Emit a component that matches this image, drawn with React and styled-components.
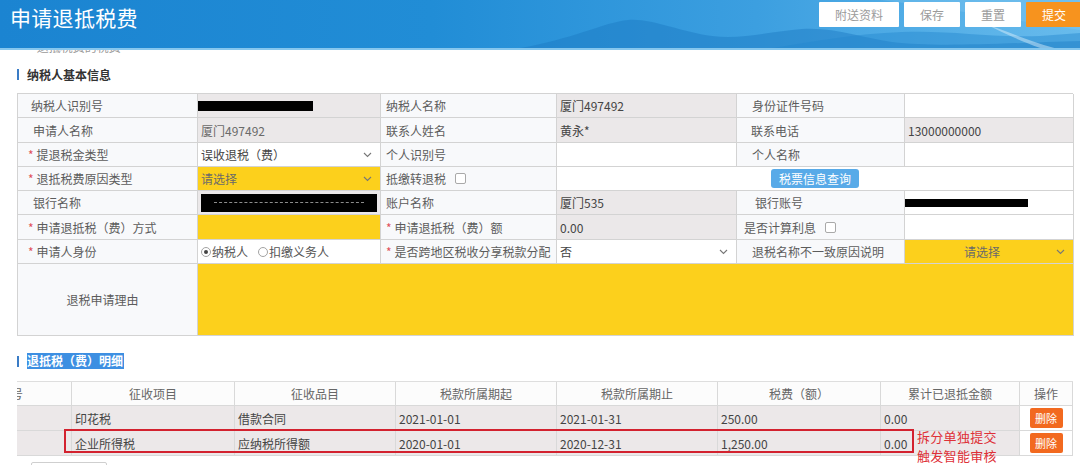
import React from 'react';
import styled, { createGlobalStyle } from 'styled-components';

const Global = createGlobalStyle`
  html, body { margin: 0; padding: 0; background: #fff; }
  body {
    font-family: "Noto Sans CJK SC", "Noto Sans", "Liberation Sans", sans-serif;
    font-size: 12px;
    color: #333;
  }
  * { box-sizing: border-box; }
`;

const Page = styled.div`
  width: 1080px;
  height: 465px;
  overflow: hidden;
`;

const Header = styled.header`
  position: relative;
  height: 50px;
  display: flex;
  justify-content: space-between;
  align-items: flex-start;
  padding-left: 10px;
  overflow: hidden;
  background: linear-gradient(90deg, #1b84d1 0%, #218dd6 40%, #3c9fe0 70%, #68bbec 100%);
  border-bottom: 2px solid #86c7ee;
`;

const HeaderArt = styled.svg`
  position: absolute;
  left: 0;
  top: 0;
  pointer-events: none;
`;

const Title = styled.h1`
  position: relative;
  margin: 6px 0 0;
  font-size: 21px;
  line-height: 22px;
  font-weight: 400;
  color: #fff;
  letter-spacing: 0.3px;
`;

const ButtonGroup = styled.div`
  position: relative;
  display: flex;
  gap: 5px;
  margin-top: 2px;
  margin-right: -2px;
`;

const HeaderButton = styled.button`
  width: ${p => p.$w}px;
  height: 25px;
  border: none;
  border-radius: 1px;
  font-family: inherit;
  font-size: 12px;
  background: ${p => (p.$primary ? '#f7931e' : '#fff')};
  color: ${p => (p.$primary ? '#fff' : '#9b9b9b')};
  padding: 0;
`;

const Crumb = styled.div`
  height: 3px;
  overflow: hidden;
  display: flex;
  align-items: flex-end;
  padding-left: 22px;
  color: #9a9a9a;
  font-size: 12px;
  line-height: 12px;
`;

const SectionTitle = styled.div`
  display: flex;
  align-items: center;
  gap: 8px;
  height: 16px;
  margin: ${p => p.$mt}px 0 0 17px;
  font-size: 12px;
  font-weight: 700;
  color: #333;
  &::before {
    content: '';
    width: 2px;
    height: 11px;
    background: #3a7cc6;
  }
`;

const Highlight = styled.span`
  background: #3d8fe2;
  color: #fff;
  line-height: 16px;
  padding: 0 1px 0 0;
`;

const FormGrid = styled.div`
  margin: 11px 0 0 17px;
  width: 1056px;
  display: grid;
  grid-template-columns: 180px 183px 176px 180px 168px 169px;
  grid-template-rows: 24px 25px 24px 24px 24px 25px 24px 72px;
  border-top: 1px solid #d3d3d3;
  border-left: 1px solid #d3d3d3;
`;

const Cell = styled.div`
  grid-column: span ${p => p.$span || 1};
  border-right: 1px solid #d3d3d3;
  border-bottom: 1px solid #d3d3d3;
  display: flex;
  align-items: center;
  white-space: nowrap;
  overflow: hidden;
  font-size: 12px;
`;

const LabelCell = styled(Cell)`
  background: #f8f9fb;
  color: #5c5c5c;
  padding-left: ${p => p.$pad ?? 14}px;
  justify-content: ${p => (p.$center ? 'center' : 'flex-start')};
  ${p => (p.$center ? 'padding-left: 0; padding-right: 10px;' : '')}
`;

const toneBg = { ro: '#ebe8e9', yellow: '#fcd01c', white: '#fff' };

const ValueCell = styled(Cell)`
  background: ${p => toneBg[p.$tone || 'white']};
  color: ${p => (p.$muted ? '#6a6a6a' : '#444')};
  padding: 0 3px;
  justify-content: ${p => (p.$center ? 'center' : 'flex-start')};
`;

const Star = styled.span`
  color: #e0505a;
  margin-right: 3px;
`;

const SelectText = styled.span`
  flex: 1;
  text-align: ${p => (p.$center ? 'center' : 'left')};
  color: ${p => p.$color || '#444'};
`;

const Arrow = styled.svg`
  flex: none;
  margin-right: 5px;
`;

const Check = styled.span`
  width: 11px;
  height: 11px;
  border: 1px solid #a9a9a9;
  border-radius: 2px;
  background: #fff;
  margin-left: 9px;
`;

const RadioGroup = styled.div`
  display: flex;
  align-items: center;
  gap: 10px;
  color: #555;
`;

const RadioItem = styled.label`
  display: flex;
  align-items: center;
  gap: 1px;
`;

const RadioDot = styled.span`
  width: 10px;
  height: 10px;
  border-radius: 50%;
  border: 1px solid #a3a3a3;
  background: #fff;
  display: flex;
  align-items: center;
  justify-content: center;
  &::after {
    content: '';
    width: 4px;
    height: 4px;
    border-radius: 50%;
    background: ${p => (p.$on ? '#444' : 'transparent')};
  }
`;

const QueryButton = styled.button`
  height: 19px;
  padding: 0 8px;
  border: none;
  border-radius: 3px;
  background: #58aae8;
  color: #fff;
  font-family: inherit;
  font-size: 12px;
  font-weight: 400;
`;

const Redact = styled.span`
  width: ${p => p.$w}px;
  height: ${p => p.$h}px;
  background: #000;
  display: flex;
  align-items: center;
  justify-content: center;
`;

const RedactLine = styled.span`
  width: 150px;
  height: 1px;
  border-top: 1px dashed rgba(255, 255, 255, 0.55);
`;

const DetailWrap = styled.div`
  position: relative;
  margin: 12px 0 0 17px;
  width: 1056px;
`;

const DetailGrid = styled.div`
  display: grid;
  grid-template-columns: 55px 163px 161px 161px 161px 163px 139px 53px;
  grid-template-rows: 24px 25px 25px;
  border-top: 1px solid #dedede;
`;

const DCell = styled.div`
  border-right: 1px solid #d9d9d9;
  border-bottom: 1px solid #d9d9d9;
  display: flex;
  align-items: center;
  overflow: hidden;
  white-space: nowrap;
  font-size: 12px;
`;

const DHead = styled(DCell)`
  background: #fcfcfc;
  color: #666;
  justify-content: ${p => (p.$left ? 'flex-start' : 'center')};
`;

const ClippedText = styled.span`
  margin-left: -18px;
`;

const DData = styled(DCell)`
  background: #ece8e9;
  color: #444;
  padding-left: 3px;
`;

const DOp = styled(DCell)`
  background: #fff;
  justify-content: center;
`;

const DeleteButton = styled.button`
  width: 33px;
  height: 20px;
  border: none;
  border-radius: 2px;
  background: #f2691f;
  color: #fff;
  font-family: inherit;
  font-size: 11px;
  padding: 0;
`;

const RedBox = styled.div`
  position: absolute;
  left: 47px;
  top: 48px;
  width: 850px;
  height: 24px;
  border: 2px solid #d3222f;
  pointer-events: none;
`;

const Note = styled.div`
  position: absolute;
  left: 900px;
  top: 46px;
  color: #de3138;
  font-size: 13px;
  line-height: 19px;
  letter-spacing: 0.3px;
`;

const PagerBox = styled.div`
  margin: 6px 0 0 31px;
  width: 76px;
  height: 20px;
  border: 1px solid #cfcfcf;
  border-radius: 2px;
`;

const Chevron = () => (
  <Arrow width="9" height="6" viewBox="0 0 9 6">
    <polyline points="1,1 4.5,4.5 8,1" fill="none" stroke="#777" strokeWidth="1.1" />
  </Arrow>
);

const Label = ({ req, children, ...rest }) => (
  <LabelCell {...rest}>
    {req && <Star>*</Star>}
    {children}
  </LabelCell>
);

const detailHead = ['征收项目', '征收品目', '税款所属期起', '税款所属期止', '税费（额）', '累计已退抵金额', '操作'];
const detailRows = [
  ['印花税', '借款合同', '2021-01-01', '2021-01-31', '250.00', '0.00'],
  ['企业所得税', '应纳税所得额', '2020-01-01', '2020-12-31', '1,250.00', '0.00'],
];

export default function App() {
  return (
    <Page>
      <Global />
      <Header>
        <HeaderArt width="1080" height="50" viewBox="0 0 1080 50">
          <path d="M520 48 C 570 40, 605 22, 628 20 C 652 18, 680 32, 712 36 C 742 40, 772 31, 802 29 C 835 27, 862 38, 892 42 C 935 47, 985 44, 1080 41 L1080 50 L520 50 Z" fill="#1a78c2" opacity="0.45" />
          <path d="M760 50 C 805 43, 850 34, 902 32 C 952 30, 992 38, 1040 36 L1080 33 L1080 50 Z" fill="#2487cf" opacity="0.45" />
          <path d="M985 24 C 1010 32, 1030 42, 1062 50 L1046 50 C 1022 42, 1004 33, 985 24 Z" fill="#e4f4fd" opacity="0.45" />
          <path d="M880 0 L1080 0 L1080 30 C 1020 22, 960 10, 880 0 Z" fill="#8fd0f3" opacity="0.25" />
        </HeaderArt>
        <Title>申请退抵税费</Title>
        <ButtonGroup>
          <HeaderButton $w={80}>附送资料</HeaderButton>
          <HeaderButton $w={56}>保存</HeaderButton>
          <HeaderButton $w={56}>重置</HeaderButton>
          <HeaderButton $w={56} $primary>提交</HeaderButton>
        </ButtonGroup>
      </Header>
      <Crumb>· 退抵税费的税费</Crumb>

      <SectionTitle $mt={13}>纳税人基本信息</SectionTitle>

      <FormGrid>
        <Label $pad={13}>纳税人识别号</Label>
        <ValueCell $tone="ro" style={{ paddingLeft: 0 }}>
          <Redact $w={115} $h={10} />
        </ValueCell>
        <Label $pad={5}>纳税人名称</Label>
        <ValueCell $tone="ro">厦门497492</ValueCell>
        <Label $pad={15}>身份证件号码</Label>
        <ValueCell />

        <Label $pad={15}>申请人名称</Label>
        <ValueCell $tone="ro" $muted>厦门497492</ValueCell>
        <Label $pad={5}>联系人姓名</Label>
        <ValueCell $tone="ro">黄永*</ValueCell>
        <Label $pad={14}>联系电话</Label>
        <ValueCell $tone="ro">13000000000</ValueCell>

        <Label req $pad={10}>提退税金类型</Label>
        <ValueCell>
          <SelectText>误收退税（费）</SelectText>
          <Chevron />
        </ValueCell>
        <Label $pad={5}>个人识别号</Label>
        <ValueCell />
        <Label $pad={15}>个人名称</Label>
        <ValueCell />

        <Label req $pad={10}>退抵税费原因类型</Label>
        <ValueCell $tone="yellow">
          <SelectText $color="#6a6a6a">请选择</SelectText>
          <Chevron />
        </ValueCell>
        <Label $pad={5}>
          抵缴转退税<Check />
        </Label>
        <ValueCell $span={3} $center>
          <QueryButton>税票信息查询</QueryButton>
        </ValueCell>

        <Label $pad={15}>银行名称</Label>
        <ValueCell $tone="ro">
          <Redact $w={179} $h={18}>
            <RedactLine />
          </Redact>
        </ValueCell>
        <Label $pad={5}>账户名称</Label>
        <ValueCell $tone="ro">厦门535</ValueCell>
        <Label $pad={18}>银行账号</Label>
        <ValueCell style={{ paddingLeft: 0 }}>
          <Redact $w={123} $h={8} />
        </ValueCell>

        <Label req $pad={10}>申请退抵税（费）方式</Label>
        <ValueCell $tone="yellow" />
        <Label req $pad={5}>申请退抵税（费）额</Label>
        <ValueCell $tone="ro">0.00</ValueCell>
        <Label $pad={7}>
          是否计算利息<Check />
        </Label>
        <ValueCell />

        <Label req $pad={10}>申请人身份</Label>
        <ValueCell>
          <RadioGroup>
            <RadioItem>
              <RadioDot $on />
              纳税人
            </RadioItem>
            <RadioItem>
              <RadioDot />
              扣缴义务人
            </RadioItem>
          </RadioGroup>
        </ValueCell>
        <Label req $pad={5}>是否跨地区税收分享税款分配</Label>
        <ValueCell>
          <SelectText>否</SelectText>
          <Chevron />
        </ValueCell>
        <Label $pad={15}>退税名称不一致原因说明</Label>
        <ValueCell $tone="yellow">
          <SelectText $center $color="#6a6a6a">请选择</SelectText>
          <Chevron />
        </ValueCell>

        <Label $center>退税申请理由</Label>
        <ValueCell $tone="yellow" $span={5} />
      </FormGrid>

      <SectionTitle $mt={17}>
        <Highlight>退抵税（费）明细</Highlight>
      </SectionTitle>

      <DetailWrap>
        <DetailGrid>
          <DHead $left>
            <ClippedText>序号</ClippedText>
          </DHead>
          {detailHead.map(h => (
            <DHead key={h}>{h}</DHead>
          ))}
          {detailRows.map((row, i) => (
            <React.Fragment key={i}>
              <DData />
              {row.map((v, j) => (
                <DData key={j}>{v}</DData>
              ))}
              <DOp>
                <DeleteButton>删除</DeleteButton>
              </DOp>
            </React.Fragment>
          ))}
        </DetailGrid>
        <RedBox />
        <Note>
          拆分单独提交
          <br />
          触发智能审核
        </Note>
      </DetailWrap>
      <PagerBox />
    </Page>
  );
}
